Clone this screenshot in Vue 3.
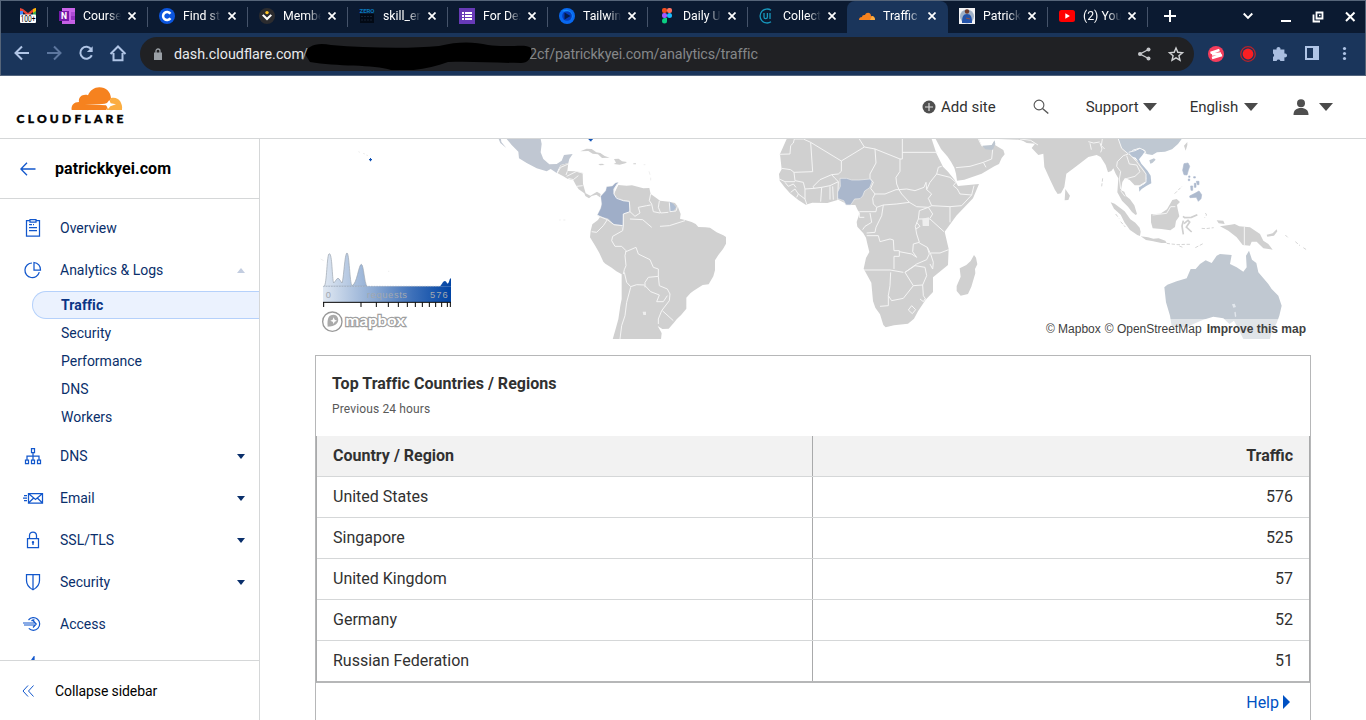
<script setup>
const tabs = [
  { icon: 'onenote', title: 'Course' }, { icon: 'coin', title: 'Find st' },
  { icon: 'member', title: 'Membe' }, { icon: 'zero', title: 'skill_er' },
  { icon: 'forms', title: 'For De:' }, { icon: 'tail', title: 'Tailwin' },
  { icon: 'figma', title: 'Daily U' }, { icon: 'ui', title: 'Collect' },
  { icon: 'cloud', title: 'Traffic', active: true }, { icon: 'person', title: 'Patrick' },
  { icon: 'yt', title: '(2) You' }
]
const subs = ['Traffic', 'Security', 'Performance', 'DNS', 'Workers']
const groups = [
  { icon: 'dns', label: 'DNS', arrow: true }, { icon: 'email', label: 'Email', arrow: true },
  { icon: 'lock', label: 'SSL/TLS', arrow: true }, { icon: 'shield', label: 'Security', arrow: true },
  { icon: 'access', label: 'Access' }, { icon: 'speed', label: '' }
]
const rows = [['United States', 576], ['Singapore', 525], ['United Kingdom', 57], ['Germany', 52], ['Russian Federation', 51]]
const ticks = [41, 153, 199, 235, 265, 292, 316, 337, 358, 377, 395, 412, 421]
</script>

<template>
  <div class="page">
    <div class="chrome">
      <div class="tabs">
        <div class="pinned">
          <svg width="18" height="18" viewBox="0 0 18 18"><path d="M1 1v8h3V5l5 4 5-4v4h3V1l-3 1-5 4-5-4z" fill="#e94335"/><path d="M1 4h3v5H1z" fill="#4285f4"/><path d="M14 4h3v5h-3z" fill="#34a853"/><path d="M14 2l3-1v3l-3 2z" fill="#fbbc04"/><rect x="1" y="7.500" width="16" height="8.500" rx="1" fill="#fff"/><text x="9" y="15.300" text-anchor="middle" font-size="9.500" textLength="15" lengthAdjust="spacingAndGlyphs" fill="#000">100+</text></svg>
        </div>
        <div v-for="(t, i) in tabs" :key="t.title" class="tab" :class="{ active: t.active, before: i === 7 }">
          <svg class="fav" width="16" height="16" viewBox="0 0 16 16">
            <template v-if="t.icon === 'onenote'"><path d="M3 0h13v16H3z" fill="#ca64ea"/><path d="M12 4h4v4h-4z" fill="#ae4bd5"/><path d="M12 8h4v4h-4z" fill="#9332bf"/><path d="M3 13h13v3H3z" fill="#c560e5"/><rect y="3" width="10" height="10" fill="#7719aa"/><text x="5" y="11" text-anchor="middle" font-size="8.500" font-weight="bold" fill="#fff">N</text></template>
            <template v-else-if="t.icon === 'coin'"><circle cx="8" cy="8" r="8" fill="#0b55de"/><path d="M11.400 10.200A4 4 0 1 1 11.400 5.800" fill="none" stroke="#fff" stroke-width="2.500"/></template>
            <template v-else-if="t.icon === 'member'"><circle cx="8" cy="8" r="8" fill="#2c2c2f"/><path d="M3 7.500l1.500-1.300L8 9.500l3.500-3.300L13 7.500l-5 5z" fill="#fff"/><circle cx="8" cy="4.600" r="1.700" fill="#ffc629"/></template>
            <template v-else-if="t.icon === 'zero'"><text x="8" y="4.800" text-anchor="middle" font-size="6" font-weight="bold" textLength="15" lengthAdjust="spacingAndGlyphs" fill="#0878bd">ZERO</text><path d="M1 6h14v9H1z" fill="#020914"/><path d="M2 8.500h12M2 12h12" stroke="#172334" stroke-dasharray="2 1"/></template>
            <template v-else-if="t.icon === 'forms'"><rect width="16" height="16" fill="#673ab7"/><path d="M3 4h2v2H3zm3 0h7v2H6zM3 7h2v2H3zm3 0h7v2H6zM3 10h2v2H3zm3 0h7v2H6z" fill="#fff"/></template>
            <template v-else-if="t.icon === 'tail'"><circle cx="8" cy="8" r="8" fill="#0868f0"/><path d="M3 3a7 7 0 0 1 9 1 6 6 0 0 1-1 9 7 7 0 0 0 1-8z" fill="#1590ff"/><circle cx="8" cy="8" r="4.800" fill="#063cba"/><path d="M5.500 4.500l6 3.500-6 3.500z" fill="#061b48"/></template>
            <template v-else-if="t.icon === 'figma'"><rect x="3" width="5" height="5" rx="2" fill="#f24e1e"/><rect x="8" width="5" height="5" rx="2" fill="#ff7262"/><rect x="3" y="5" width="5" height="5" rx="2" fill="#a259ff"/><circle cx="10.500" cy="7.500" r="2.500" fill="#1abcfe"/><path d="M3 13a3 3 0 0 1 3-3h2v3a2.500 2.500 0 0 1-5 0" fill="#0acf83"/></template>
            <template v-else-if="t.icon === 'ui'"><path d="M12 2.200A7 7 0 1 0 12 13.800M5 5v4a1.700 1.700 0 0 0 3.400 0V5M11 5v6" fill="none" stroke="#1797bd" stroke-width="1.300"/></template>
            <template v-else-if="t.icon === 'cloud'"><path d="M0 12c0-2 1-3 3-3 0-2 2-2 3-2 1-3 6-3 6 1 2 0 4 1 4 4z" fill="#f6821f"/><path d="M11 12l2-4c2 0 3 2 3 4z" fill="#fbad41"/></template>
            <template v-else-if="t.icon === 'person'"><path d="M0 0h16v16H0z" fill="#f3f3f5"/><circle cx="8" cy="8.500" r="7" fill="#9fb0c6"/><circle cx="8" cy="3.500" r="2.200" fill="#6d392b"/><path d="M3 15c0-6 1-9 5-9s5 3 5 9z" fill="#2453a9"/><path d="M7 10l4 1" stroke="#9a523c"/></template>
            <template v-else><rect y="2" width="16" height="12" rx="2.500" fill="#f00"/><path d="M6.300 5.300l4.600 2.700-4.600 2.700z" fill="#fff"/></template>
          </svg>
          <span class="ttl">{{ t.title }}</span>
          <svg class="x" width="8" height="8" viewBox="0 0 8 8"><path d="M.5 .5l7 7m0-7l-7 7" stroke="#fff" stroke-width="1.700"/></svg>
        </div>
        <svg class="winctl" width="218" height="32" viewBox="1148 0 218 32" fill="none" stroke="#fff"><path d="M1164 16h12m-6-6v12" stroke-width="2"/><path d="M1243.700 13.500l4.300 4.300 4.300-4.300" stroke-width="1.900"/><path d="M1281 21h10" stroke-width="2"/><path d="M1316.500 12.500h6v6h-6zm-3 2v7h6.500" stroke-width="1.800"/><path d="M1319 15.500h1.500" stroke-width="1.500"/><path d="M1346 12.500l8.500 8.500m0-8.500l-8.500 8.500" stroke-width="2"/></svg>
      </div>
      <div class="toolbar">
        <svg class="navs" width="140" height="42" viewBox="0 33 140 42" fill="none" stroke="#b0c5e6" stroke-width="2"><path d="M29 53H16m6-6.500L15.500 53l6.500 6.500"/><path d="M47 53h13m-6-6.500L60.500 53 54 59.500" stroke="#5d779f"/><path d="M91.300 49.300a6 6 0 1 0 .500 6"/><path d="M92.700 46.300v5.800h-5.800z" fill="#b0c5e6" stroke="none"/><path d="M113.500 53v7.200h9V53m-12 1l7.500-7.500 7.500 7.500"/></svg>
        <div class="url">
          <svg class="plock" width="8" height="12" viewBox="0 0 8 12"><path d="M0 4.500h8V12H0z" fill="#9aa0a6"/><path d="M2 5V3a2 2 0 0 1 4 0v2" fill="none" stroke="#9aa0a6" stroke-width="1.300"/></svg>
          <span class="host">dash.cloudflare.com</span><span class="slash">/</span>
          <span class="path">2cf/patrickkyei.com/analytics/traffic</span>
          <svg class="redact" width="232" height="30" viewBox="302 40 232 30"><path d="M306 54c2-8 11-12 26-9 35 3 78 4 108 1 20-5 36-4 49-1 21 3 38-2 43 3 2 8-2 15-10 15-27 0-49-2-73-1-17 6-35 10-57 8-17-6-55-3-81-8z" fill="#000"/></svg>
          <svg class="uicons" width="60" height="34" viewBox="1134 37 60 34"><path d="M1148.500 49.500l-8.500 4.500 8.500 4.500" fill="none" stroke="#c5c7ca" stroke-width="1.400"/><g fill="#c5c7ca"><circle cx="1148.500" cy="49.500" r="2"/><circle cx="1140" cy="54" r="2"/><circle cx="1148.500" cy="58.500" r="2"/></g><path d="M1176 48l1.800 4.300 4.700.4-3.600 3 1.100 4.500-4-2.400-4 2.400 1.100-4.500-3.600-3 4.700-.4z" fill="none" stroke="#d0d2d4" stroke-width="1.400"/></svg>
        </div>
        <svg width="171" height="42" viewBox="1193 33 171 42"><circle cx="1215" cy="54" r="8" fill="#f43d5c"/><path d="M1209.500 53l9-3M1211 58l10-3M1211 54.500l9-1" stroke="#fff" stroke-width="2.500"/><circle cx="1247" cy="54" r="7.300" fill="none" stroke="#b5232b" stroke-width="1.300"/><circle cx="1247" cy="54" r="5.400" fill="#f91f23"/><path d="M1272 49.500h3.600a2 2 0 1 1 3.800 0h4v4a2 2 0 1 1 0 3.800v3.700h-4a2 2 0 0 0-3.800 0H1272v-4a2 2 0 0 0 0-3.600z" fill="#a9bee0"/><path d="M1305 47h12v12h-12z" fill="none" stroke="#b0c5e6" stroke-width="2"/><path d="M1312 47h5v12h-5z" fill="#b0c5e6"/><g fill="#b0c5e6"><circle cx="1343.500" cy="48.500" r="1.600"/><circle cx="1343.500" cy="53.500" r="1.600"/><circle cx="1343.500" cy="58.500" r="1.600"/></g></svg>
      </div>
    </div>

    <header class="top">
      <svg class="logo" width="124" height="50" viewBox="0 80 124 50">
        <g transform="translate(0 76) scale(.33333)"><path d="M215 102c-2-15 7-24 22-24-3-16 13-25 27-20 6-15 19-24 34-24 20 0 34 14 35 33l-14 35z" fill="#f6821f"/><path d="M332 67c21-7 37 12 34 35h-46z" fill="#fbad41"/><path d="M255 85c30-1 50 2 66-4l7-9 4 10 16 3-17 6-6 7-7-10z" fill="#fff"/></g>
        <text x="16.500" y="122.700" textLength="107" class="brand">CLOUDFLARE</text>
      </svg>
      <div class="actions">
        <div class="act add"><svg width="14" height="14" viewBox="0 0 14 14"><circle cx="7" cy="7" r="6.500" fill="#4f4f4f"/><path d="M3 7h8M7 3v8" stroke="#ddd" stroke-width="1.200"/></svg><span>Add site</span></div>
        <svg class="search" width="16" height="16" viewBox="0 0 16 16" fill="none" stroke="#555"><circle cx="6" cy="6" r="4.900" stroke-width="1.100"/><path d="M9.500 9.500l5.800 5" stroke-width="1.400"/></svg>
        <div class="act sup"><span>Support</span><i class="tri"></i></div>
        <div class="act eng"><span>English</span><i class="tri"></i></div>
        <div class="act usr"><svg width="16" height="16" viewBox="0 0 16 16" fill="#4f4f4f"><circle cx="8" cy="4.200" r="4"/><path d="M.5 16c0-5 3-7 7.500-7s7.500 2 7.500 7z"/></svg><i class="tri"></i></div>
      </div>
    </header>

    <div class="body">
      <aside>
        <div class="site"><svg width="16" height="14" viewBox="0 0 16 14" fill="none" stroke="#1257cc" stroke-width="1.300"><path d="M15.500 7H1M7 .7L.9 7 7 13.300"/></svg><b>patrickkyei.com</b></div>
        <nav>
          <div class="item"><svg width="22" height="20" viewBox="0 0 22 20"><path d="M8 2.500H4.500v15.500h13V2.500H14M8 1.500h6v2.500H8zM7 6.500h3m-3 3h8m-8 3h8M11 6.500h1"/></svg><span>Overview</span></div>
          <div class="item"><svg width="22" height="20" viewBox="0 0 22 20"><path d="M10 3a7.300 7.300 0 1 0 7.300 9.200M12 2.500V10h6.500A7 7 0 0 0 12 2.500z"/></svg><span>Analytics &amp; Logs</span><i class="caret up"></i></div>
          <div class="subs"><div v-for="(s, i) in subs" :key="s" class="sub" :class="{ on: i === 0 }">{{ s }}</div></div>
          <div v-for="g in groups" :key="g.icon" class="item">
            <svg width="22" height="20" viewBox="0 0 22 20">
              <path v-if="g.icon === 'dns'" d="M9.500 2.500h3v4h-3zM3.500 14h3v3.500h-3zM9.500 14h3v3.500h-3zM15.500 14h3v3.500h-3zM11 6.500V14M5 14v-4h12v4"/>
              <path v-else-if="g.icon === 'email'" d="M6.500 5.500h14v9.500h-14zM7 6l6.500 5.500L20 6M7 14.500l4.700-4.500M20 14.500L15.300 10M2 7.500h3M1 10h4M2 12.500h3"/>
              <template v-else-if="g.icon === 'lock'"><path d="M5.500 8.500h11v9h-11zM7.500 8.500V5.500a3.500 3.500 0 0 1 7 0v3M11 12v3"/><circle cx="11" cy="12.200" r=".6"/></template>
              <path v-else-if="g.icon === 'shield'" d="M4.500 2.500h13v6c0 5-3 7.500-6.500 9.300-3.500-1.800-6.500-4.300-6.500-9.300zM11 2.500V17.500"/>
              <path v-else-if="g.icon === 'access'" d="M6.500 6a6.300 6.300 0 1 1 .3 8.300M1 9h12M2 11h11M11 6.500L14.200 10 11 13.500M9.500 7c1-1 2-1.300 3-1" stroke-width="1.200"/>
              <path v-else d="M12 .8L5 11h5l-1 8 9-11h-6z" fill="#1257cc"/>
            </svg>
            <span>{{ g.label }}</span><i v-if="g.arrow" class="caret"></i>
          </div>
        </nav>
        <div class="collapse"><svg width="13" height="12" viewBox="0 0 13 12" fill="none" stroke="#1257cc"><path d="M6 .5L1 6l5 5.500M11.500 .5L6.500 6l5 5.500"/></svg><span>Collapse sidebar</span></div>
      </aside>

      <main>
        <div class="map">
          <svg width="996" height="200" viewBox="315 139 996 200">
            <defs>
              <linearGradient id="scale" gradientUnits="userSpaceOnUse" x1="39" y1="0" x2="423" y2="0"><stop offset="0" stop-color="#e0e8f2"/><stop offset=".4" stop-color="#8ba9d2"/><stop offset=".7" stop-color="#3d70b9"/><stop offset="1" stop-color="#0043a3"/></linearGradient>
            </defs>
            <g transform="translate(310 139) scale(.333333)">
              <path class="land" d="M925 138l25 2 16-1 34 9 18-1 4 18 14 10 14 10 28 3 17 4 9 12 8 21-2 14 15 4 20 6 12 6 8 9 21 1 14 1 20 14 20 9 8 5v20l-9 16-14 18-10 16v30l-5 18-14 24-18 2-27 17-10 8-12 13v33l-15 18-14 14-9 11-15 17-19 1-14-9 9 16 3 6-2 18H908l8-28 9-32 6-41 4-20v-74l-16-9-14-11-19-12-6-6-12-26-12-21-16-26 2-20 5-19 17-13 44-70z"/>
              <path d="M590 0l15 18 20 20 2 20 23 14 30 16 30 9 12-7 18 12 5-11 7-13 23-6 3-12 10-15-26 3-7 17-15 10-22 1-18-16-8-20 3-25-3-15zM566 0l5 12 18 15-15-18-1-9z" fill="#c0c7d2"/>
              <path class="land" d="M743 103l9-24 23-7-3 24 22 1 24 5 1 33 8 28 14 7 20-12 11 7-2 10-11-8-14 4-8 7-11-7-3-8-17-12-8-12-8-15-18-5-12-7zM811 37l19-8 15 1 14 10 12 2 13 9 15 5-23 1-12-11-16-2-13-8zM912 60l14-1 10 8 15 2-5 4-17 4-18-2 7-4zM865 75l12-1 7 4-14 1zM970 73h8v3h-8z"/>
              <path d="M925 130L916 132 907 141 890 143 887 155 872 172 875 195 872 208 862 228 878 235 895 240 912 257 935 259 938 272 940 225 958 220 960 210 958 187 940 185 920 175 912 165 912 150z" fill="#9faec8" stroke="#eee" stroke-width="1"/>
              <path d="M1078 188l12 6 8 11-9 13-12-2z" fill="#afbed3"/>
              <path d="M836 0h12v3h-3v4h-6V3h-3zM180 57h3v3h3v4h-3v3h-3v-3h-3v-4h3z" fill="#1052b5"/>
              <path d="M145 38l5 2m9 3l6 2m4 3l5 2M32 360l9 5M748 243h4m8 0h6m235-166h5m11 20l3 10m2 9v8M234 397h4" stroke="#ccc" fill="none"/>
              <path class="bd" d="M742 102L752 85 775 75M772 97L768 108M770 112L800 97 820 103M775 118L790 122 805 110M800 142L818 140M922 135L912 150 912 165 920 178 940 185 958 187 960 218 975 232 990 222 985 205 1010 200 1022 198M1022 165L1018 185 1025 195 1030 218 1050 222M1048 186L1045 205 1052 222 1075 220M1078 190L1080 218 1098 216 1103 200M960 218L940 225 940 258 938 275 908 292 905 305 915 322 935 322 948 335 945 350 948 380 943 392 940 405M948 338L978 325 985 345 1020 362 1030 385 1045 390 1045 412 1015 415 1005 430 1005 445M943 400L950 430 962 443 980 437 1003 438M962 445L950 490 945 530 935 560 930 600M1005 440L1022 458 1048 468 1040 488 1060 488 1072 470M1045 412L1048 440 1072 450 1080 465 1078 485 1055 515 1045 540 1045 555M1057 515L1090 545M862 230L892 242 880 260 860 280 845 278M892 242L912 257 938 260M960 240L998 242 1025 265M1050 262L1078 260 1125 245"/>
              <path d="M998 518h10v10h-8z" fill="#eee"/>
              <g fill="url(#scale)" stroke="#9aa3ad" stroke-width="2"><path d="M42 442c9-4 8-98 16-98 9 0 8 74 13 88 5-4 9-14 13-14s8 10 12 14c5-10 8-90 15-90s8 90 15 98c15-4 20-64 28-64 7 0 9 56 17 66z"/><path d="M388 442c8-2 9-16 17-16 6 0 5 12 10 6 4-4 3-14 8-14v24z" stroke="none"/></g>
              <path d="M39 442h384v47H39z" fill="url(#scale)"/><path d="M39 442h350" stroke="#99a6b8" stroke-width="2" stroke-dasharray="5 3"/>
              <path d="M39 490h384" stroke="#000" stroke-width="3"/><path v-for="t in ticks" :key="t" :d="`M${t} 490v14`" stroke="#000" stroke-width="3"/>
              <g fill="#a3a8af" class="legend"><text x="47" y="477">0</text><text x="171" y="477" textLength="120">requests</text><text x="360" y="477" textLength="53">576</text></g>
              <circle cx="67" cy="548" r="29" fill="#fff" stroke="#999" stroke-width="4"/><path d="M53 563c-2-26 3-36 18-36 11 0 19 15 10 26-7 9-19 10-28 10z" fill="#aaa"/><path d="M71 535l3 7 7 3-7 3-3 7-3-7-7-3 7-3z" fill="#fff"/>
              <text x="106" y="560" class="mapbox" textLength="179" lengthAdjust="spacingAndGlyphs">mapbox</text>
            </g>
            <g transform="translate(770 139) scale(.333333)">
              <path class="land" d="M50 0L30 45 35 91 27 105 29 125 44 145 60 163 85 183 107 197 127 191 172 192 205 182 223 191 231 198 256 198 263 213 269 221 260 249 262 263 280 283 288 296 292 314 298 339 288 357 281 389 304 431 309 486 316 506 330 526 340 558 347 565 372 559 414 554 432 539 444 517 467 482 489 459V415L534 378 536 330 524 278 559 230 609 178 627 135 564 141 554 123 534 98 519 83 499 43 485 0z"/>
              <path class="land" d="M497 0l16 30 20 23 10 15 10 18 5 18 3 21 22-3 52-18 38-22 14-7 8-18 9-11-4-13-24-14-4-12-9 18-28-3-8-22z"/>
              <path class="land" d="M685 0l60 2 25 5h10V0z"/>
              <path d="M637 20l28-2 9-14 2 11-8 18-22-2z" fill="#bdc6d0"/>
              <path class="bd" d="M73 0L70 12 62 20 60 45 28 46M72 0H100L122 10M35 88L62 92 72 100 128 98 122 10 214 66 283 24 268 0M283 24L315 30 390 60M397 0V60H390M397 40H503M390 60V97L378 115 380 135 387 152M315 30L318 72 300 105 300 118M214 66V97L205 105 185 107 150 122 130 142 132 148 155 145 180 140 205 128 195 118 185 107M205 128L203 182M188 142L190 182M180 142V182M155 145L152 188M132 148L105 150 105 180 110 195M72 100L75 125 100 130 105 150M75 128L45 128 28 120M45 130L55 142 70 135 78 145M62 160L75 150 85 165 80 175M85 165L105 180M300 118L310 130 302 148 315 165 308 178 310 195 320 205 318 218 268 218M315 165L345 165 378 152 387 152 395 165 418 190 380 195 340 198 320 205M418 190L440 203 475 205 485 200 475 178 485 165 470 152 468 130 462 145 435 155 410 150 387 152M470 152L480 130 500 105 540 115 558 130 550 140 562 150 570 165 605 168 575 200 540 203 485 200M540 203V250M500 105L505 85 515 82M605 168L612 140M475 205L488 225 480 238M475 205L448 215 445 240H480L522 278M440 250L450 262 438 270M445 240L436 262 440 285 448 310 430 315 428 338 440 355 425 345 388 338M340 198L335 230 318 265 315 280 290 282M300 222L305 250 285 262 278 272M268 222V235H283M290 290H325L330 308 360 300 370 303 372 335H388V352H372V390M282 393H360L400 400M448 312L472 325 478 345 470 362 440 375 405 400 430 440 458 438 470 410 465 385 435 380 405 400M472 325L482 345 490 370 488 390 480 375M482 342H510L536 332M362 400L360 440 355 470V500L330 502M355 470L365 485 400 478 430 440M458 438L460 470 468 482M450 480L460 488 465 480M415 513L425 500 437 512 427 524zM558 86L600 82 640 70 665 60 668 32M640 70L648 85M625 0L635 20"/>
              <path d="M210 118h20l15 5h22l34-3 5 8-7 18-15 10-6 15-8 8-16 1-12 18H228l-7-13-18-6v-20l8-17z" fill="#aab7cc" stroke="#eee" stroke-width="2"/>
              <path class="land" d="M612 348l6 8 4 20-7 14 1 13-12 40-10 22-22 5-12-14v-15l12-28-3-25 20-10 13-12z"/>
              <path d="M457 239l20-4v26h-19z" fill="#eee"/>
            </g>
            <g transform="translate(1020 139) scale(.333333)">
              <path class="land" d="M0 0l20 12 25 2-10 13 20 21 15-4 3 40 18 40 14 29 8 12 10-2 10-19 6-40 30-22 36-28 25-6 12 6 15 24 7 22 10-4 6-8 7 16 8 14-3 42 14 25 18 18 12 16 11 9 4-3-8-26-13-18-12-10-5-13-10-4 4-25 8-12 14 6 15 16h15l20-13v-26l-22-30-30-24L297 0zM136 150l14 20-5 13-11 1zM272 190l12 4 14 11 16 12 17 24 15 10 13 15 3 12-2 13-8-3-22-15-16-22-12-24-20-18zM362 292l22 3 16 4 16-1 20 7 4 7-16 0-28-6-18-3zM393 226l28-2 20-13 16-28 13-3 10 9-9 9 2 12 5 22-10 14-3 18-14 10-27-4-26-2-5-18zM590 244l20 1 4 10-18-2zM600 262L632 257 644 255 658 262 690 265 720 285 730 305 745 315 758 332 730 328 710 308 695 308 690 320 668 318 650 295 625 275zM492 20l10-11v9l-5 17zM740 287l18-4 12-12 2 6-10 13-20 3z"/>
              <path d="M295 0l10 26 20 20 14-14 20-6 14 8 2 10 22 4 14-8 24-2 21-7 18-16 11-15zM388 64l14-6 5 4-10 10-6 2z" fill="#bfc8d2"/>
              <path d="M326 40l18-7 20-5 10 10-7 11-10 12 7 13 19 22 9 14 2 23-14 7-15 10-7 8-1-14 17-10 5-15-4-22-18-26-10-15-14-4z" fill="#b4c1d2"/>
              <path d="M492 74l12-2 5 10-4 12-4 14-9-1-4-13zM506 111h4v4h-4zm15 2h5v4h-5zm-16 7h4v5h-4zm24 7h8v10h-5zm-17 14h6v13h-5zm11-8h5v12h-5zm-14 38l16-8 12-7 8 11-2 12-8 8-6-12-19 1z" fill="#adbace" stroke="#adbace" stroke-width="2"/>
              <path d="M433 445L442 437 470 427 500 418 512 390 527 390 540 375 557 364 575 372 590 350 600 345 635 348 630 375 650 385 670 398 680 385 678 350 687 335 696 362 709 372 715 400 745 435 755 450 775 470 785 500 778 530 770 552 755 580 750 600 670 600 650 560 642 545 628 555 610 538 580 533 550 542 520 555 500 565 455 562 450 530 438 490z" fill="#c0c8d1"/>
              <path d="M636 496l8-2 4 10-8 2zm7 24l4-2 2 14-4 3z" fill="#e2e7ed"/>
              <path d="M489 232l5 4 20-1 18-8M490 245l-4 16 4 25m2-32l12-10 5 5-10 15 16 15" stroke="#cfcfcf" stroke-width="5" fill="none"/>
              <path d="M464 164l22-22M556 222l4 6-6 8M545 268l12 1 24-3M440 313l14 2 20 2 22-1 18 0m12 10l23-12m-71 7l10 4M796 288l10 10m20 10l14 12m10 6l12 8M287 225l10 13m5 10l14 16M248 118l-3 24" stroke="#d5d5d5" stroke-width="3" stroke-dasharray="10 5" fill="none"/>
              <path class="bd" d="M205 8l16 4 18-3m-29 4l4 19m26-20l6 18-4 10M247 0l-3 20 10 10M295 0L305 28 325 45M326 40L345 35 360 28 375 35 378 45M325 45L310 50 292 68 290 82 302 98 298 120 302 150M320 50L328 75 350 78 360 98 345 112 315 120M328 45L350 68 378 105 378 130 355 145M302 155L315 172M398 228l42-5 12-20 14 0M673 262v58M0 0l32 4 22 14"/>
            </g>
          </svg>
          <div class="attr"><span>© Mapbox</span><span>© OpenStreetMap</span><b>Improve this map</b></div>
        </div>
        <section class="card">
          <h2>Top Traffic Countries / Regions</h2>
          <p>Previous 24 hours</p>
          <div class="table">
            <div class="row head"><span>Country / Region</span><span>Traffic</span></div>
            <div v-for="r in rows" :key="r[0]" class="row"><span>{{ r[0] }}</span><span>{{ r[1] }}</span></div>
          </div>
          <div class="help"><span>Help</span><i></i></div>
        </section>
      </main>
    </div>
  </div>
</template>

<style>
body { margin: 0; overflow: hidden; }
</style>
<style scoped>
.page { width: 1366px; height: 720px; overflow: hidden; background: #fff; font-family: Roboto, sans-serif; display: flex; flex-direction: column; color: #313131; }
.page * { box-sizing: border-box; }
svg { display: block; flex: none; }
.chrome { height: 76px; flex: none; background: #1a355b; border: 1px solid #566579; border-bottom-color: #53657e; }
.tabs { height: 32px; background: #0b1a31; display: flex; }
.pinned { width: 47px; flex: none; padding: 6px 0 0 18px; background: linear-gradient(#45536a, #45536a) 46px 6px / 1px 20px no-repeat; }
.tab { width: 100px; flex: none; display: flex; align-items: center; padding: 0 0 2px 11px; background: linear-gradient(#45536a, #45536a) 99px 6px / 1px 20px no-repeat; }
.tab.active { background: #1a355b; border-radius: 8px 8px 0 0; margin-left: -1px; width: 101px; padding-left: 12px; }
.tab.before { background: none; }
.ttl { width: 38px; margin-left: 8px; height: 18px; line-height: 18px; overflow: hidden; white-space: nowrap; color: #fff; font-size: 12.300px; mask-image: linear-gradient(90deg, #000 65%, transparent 100%); }
.x { margin-left: 7px; }
.winctl { margin-top: -1px; }
.toolbar { height: 42px; display: flex; }
.navs { margin-left: -1px; }
.url { position: relative; width: 1054px; height: 34px; margin-top: 4px; background: #202124; border-radius: 17px; display: flex; align-items: center; font-size: 14.300px; color: #9aa0a6; }
.plock { margin-left: 14px; }
.host { margin-left: 12px; color: #e8eaed; width: 128px; white-space: nowrap; }
.slash { width: 6px; position: relative; z-index: 1; }
.path { margin-left: 221px; color: #858789; letter-spacing: -.12px; white-space: nowrap; }
.redact { position: absolute; left: 161px; top: 3px; }
.uicons { margin-left: auto; }
.top { height: 63px; flex: none; border-bottom: 1px solid #d5d7d8; display: flex; justify-content: space-between; }
.logo { margin-top: 4px; }
.brand { font-family: Lato, sans-serif; font-weight: 900; font-size: 12px; fill: #000; stroke: #000; stroke-width: .4px; }
.actions { display: flex; align-items: center; font-size: 15px; width: 444px; }
.act { display: flex; align-items: center; height: 20px; }
.add svg { margin-right: 5px; }
.search { margin-left: 37px; }
.sup { margin-left: 37px; }
.sup .tri { margin-left: 4px; }
.eng { margin-left: 33px; }
.eng .tri { margin-left: 6px; }
.usr { margin-left: 35px; }
.tri { border: 7px solid transparent; border-top: 8px solid #4a4a4a; border-bottom: 0; }
.usr .tri { margin-left: 10px; }
.body { flex: 1; min-height: 0; display: flex; }
aside { width: 260px; flex: none; border-right: 1px solid #d5d7d8; display: flex; flex-direction: column; }
.site { height: 60px; flex: none; border-bottom: 1px solid #d5d7d8; display: flex; align-items: center; padding-left: 20px; font-size: 16px; color: #000; gap: 19px; }
.site b { font-weight: 700; letter-spacing: .06px; }
nav { flex: 1; min-height: 0; overflow: hidden; padding-top: 8px; }
.item { height: 42px; display: flex; align-items: center; padding: 0 14px 0 22px; font-size: 14px; color: #0a2f6b; }
.item svg { margin-right: 16px; fill: none; stroke: #1257cc; stroke-width: 1.250; }
.caret { margin-left: auto; border: 4.500px solid transparent; border-top: 5px solid #0a2f6b; border-bottom: 0; }
.caret.up { border: 4px solid transparent; border-bottom: 5px solid #c3cde0; border-top: 0; }
.subs { padding: 0 0 4px 32px; font-size: 14px; color: #0a2f6b; }
.sub { height: 28px; line-height: 28px; padding-left: 29px; }
.sub.on { background: #ebf2fe; border: 1px solid #b5d1fb; border-right: 0; border-radius: 14px 0 0 14px; padding-left: 28px; line-height: 26px; font-weight: 700; color: #0a3585; letter-spacing: .1px; }
.collapse { height: 60px; flex: none; border-top: 1px solid #d5d7d8; display: flex; align-items: center; padding: 1px 0 0 22px; gap: 20px; color: #000; font-size: 14px; letter-spacing: -.1px; }
main { flex: 1; padding-left: 55px; }
.map { position: relative; height: 200px; width: 996px; overflow: hidden; }
.land { fill: #d0d0d0; }
.bd { fill: none; stroke: #f5f5f5; stroke-width: 3; }
.legend { font: 28px "Liberation Sans", sans-serif; }
.mapbox { font: 700 48px Lato, sans-serif; fill: #fff; stroke: #a0a0a0; stroke-width: 7px; paint-order: stroke; }
.attr { position: absolute; right: 0; bottom: 0; height: 20px; padding: 0 5px; display: flex; align-items: center; background: rgba(255, 255, 255, .5); font: 12px "Liberation Sans", sans-serif; color: #404040; gap: 4px; }
.attr b { margin-left: 1px; }
.card { width: 996px; height: 400px; margin-top: 16px; border: 1px solid #b6b7b8; }
h2 { margin: 16px 16px 0; font-size: 16px; line-height: 24px; font-weight: 700; letter-spacing: .02px; }
p { margin: 4px 16px 0; font-size: 12px; line-height: 18px; color: #595959; letter-spacing: .14px; }
.table { margin-top: 18px; border: 1px solid #a9aaab; border-top: 0; border-bottom: 2px solid #b6b7b8; }
.row { display: grid; grid-template-columns: 496px 1fr; height: 41px; line-height: 40px; border-bottom: 1px solid #d5d7d8; font-size: 16px; }
.row:last-child { border-bottom: 0; height: 40px; }
.row span { padding: 0 16px; }
.row span:first-child { border-right: 1px solid #a9aaab; }
.row span:last-child { text-align: right; }
.head { background: #f2f2f2; font-weight: 700; height: 41px; }
.help { display: flex; justify-content: flex-end; align-items: center; height: 38px; padding-right: 20px; color: #0051c3; font-size: 16px; }
.help i { margin-left: 4px; border: 7px solid transparent; border-left-color: #0051c3; border-right: 0; }
</style>
